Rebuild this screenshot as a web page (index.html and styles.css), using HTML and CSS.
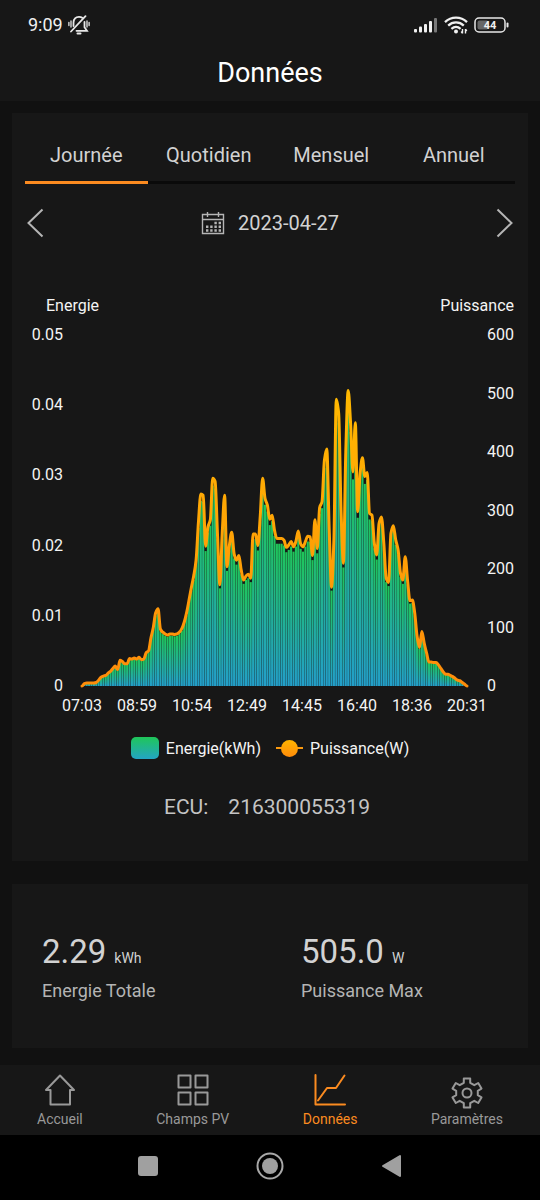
FILE: index.html
```html
<!DOCTYPE html>
<html lang="fr">
<head>
    <meta charset="UTF-8">
    <meta name="viewport" content="width=device-width, initial-scale=1.0">
    <title>Données</title>
    <link rel="stylesheet" href="styles.css">
</head>
<body>

    <!-- Header -->
    <header class="header">
        <div class="status-bar">
            <span class="clock">9:09</span>
            <svg class="bell" width="22" height="20" viewBox="0 0 22 20" fill="none" stroke="#e8e8e8" stroke-width="1.8" stroke-linecap="round">
                <path d="M5.500 11V7.500C5.700 4 8 1.800 11 1.800C12.300 1.800 13.400 2.100 14.200 2.700M16.500 7V12.200L19 15.800H8.500"/>
                <path d="M17.500 1.200L3 16.500"/>
                <path d="M9.500 18.500H12.500" stroke-width="2"/>
                <path d="M.9 7.500V10.500M3 6V12M19 6V12M21.100 7.500V10.500" stroke-width="1.300"/>
            </svg>
            <div class="status-right">
                <svg width="24" height="16" viewBox="0 0 24 16">
                    <g fill="#f0f0f0">
                        <rect x="0" y="12" width="3" height="3.500" rx="1"/>
                        <rect x="5" y="9.500" width="3" height="6" rx="1"/>
                        <rect x="10" y="7" width="3" height="8.500" rx="1"/>
                        <rect x="15" y="4" width="3" height="11.500" rx="1"/>
                    </g>
                    <rect x="20" y="1" width="3" height="14.500" rx="1" fill="#777"/>
                </svg>
                <svg width="24" height="18" viewBox="0 0 24 18" fill="none" stroke="#f0f0f0" stroke-width="2.300">
                    <path d="M1 6.200C7.200 .2 16.800 .2 23 6.200"/>
                    <path d="M4.200 9.600C8.700 5.400 15.300 5.400 19.800 9.600"/>
                    <path d="M7.400 12.800C10.200 10.400 13.800 10.400 16.600 12.800"/>
                    <circle cx="12" cy="15.600" r="2" fill="#f0f0f0" stroke="none"/>
                    <path d="M18.500 13V17.500M17.200 15.500L18.500 17.300M21.500 17.500V13M22.800 15L21.500 13.200" stroke-width="1.400"/>
                </svg>
                <svg width="36" height="16" viewBox="0 0 36 16">
                    <rect x="1" y="1" width="30" height="14" rx="4" fill="none" stroke="#e8e8e8" stroke-width="1.500"/>
                    <rect x="3.500" y="3.500" width="11" height="9" rx="2" fill="#666"/>
                    <rect x="32.500" y="5.500" width="2" height="5" rx="1" fill="#e8e8e8"/>
                    <text class="battery-text" x="16" y="12">44</text>
                </svg>
            </div>
        </div>
        <h1>Données</h1>
    </header>

    <main class="content">
        <!-- Chart card -->
        <section class="card chart-card">
            <div class="tabs">
                <button type="button" class="tab active">Journée</button>
                <button type="button" class="tab">Quotidien</button>
                <button type="button" class="tab">Mensuel</button>
                <button type="button" class="tab">Annuel</button>
            </div>

            <div class="date-row">
                <button type="button" class="arrow" aria-label="Jour précédent">
                    <svg width="17" height="30" viewBox="0 0 17 30"><path d="M15.500 1.500L1.500 15L15.500 28.500"/></svg>
                </button>
                <button type="button" class="date">
                    <svg width="24" height="24" viewBox="0 0 24 24" fill="none" stroke="#b5b5b5" stroke-width="1.400">
                        <path d="M1.500 3.500H22.500V22.500H1.500ZM1.500 8.500H22.500M6.500 1V6M17.500 1V6"/>
                        <path d="M13.400 12H20.500M5 15.800H20.500M5 19.500H20.500" stroke-width="2.400" stroke-dasharray="2.400 1.800"/>
                    </svg>
                    <span>2023-04-27</span>
                </button>
                <button type="button" class="arrow" aria-label="Jour suivant">
                    <svg width="17" height="30" viewBox="0 0 17 30"><path d="M1.500 1.500L15.500 15L1.500 28.500"/></svg>
                </button>
            </div>

            <svg id="chart" class="chart" viewBox="0 0 490 460">
                <defs>
                    <linearGradient id="barFill" x1="0" y1="0" x2="0" y2="1">
                        <stop offset="0" stop-color="#1fc659"/>
                        <stop offset="1" stop-color="#239fca"/>
                    </linearGradient>
                    <linearGradient id="lineFill" x1="0" y1="0" x2="0" y2="1">
                        <stop offset="0" stop-color="#ffb800"/>
                        <stop offset="1" stop-color="#ff8c0a"/>
                    </linearGradient>
                </defs>
                <text x="21" y="49">Energie</text>
                <text x="489" y="49" text-anchor="end">Puissance</text>
                <g id="bars" fill="url(#barFill)"></g>
                <path id="line" fill="none" stroke="url(#lineFill)" stroke-width="3" stroke-linejoin="round" stroke-linecap="round"/>
                <g id="labels"></g>
            </svg>

            <div class="legend">
                <span class="legend-item"><i class="swatch-bar"></i>Energie(kWh)</span>
                <span class="legend-item"><i class="swatch-line"></i>Puissance(W)</span>
            </div>

            <p class="ecu"><span>ECU:</span><span>216300055319</span></p>
        </section>

        <!-- Totals -->
        <section class="card totals">
            <div class="total">
                <p class="value">2.29<small>kWh</small></p>
                <p class="name">Energie Totale</p>
            </div>
            <div class="total">
                <p class="value">505.0<small>W</small></p>
                <p class="name">Puissance Max</p>
            </div>
        </section>
    </main>

    <!-- App navigation -->
    <nav class="nav">
        <a href="#accueil">
            <svg width="32" height="32" viewBox="0 0 32 32"><path d="M16 1.500L30 16H26V30.500H6.500V16H2Z"/></svg>
            Accueil
        </a>
        <a href="#champs">
            <svg width="32" height="32" viewBox="0 0 32 32"><path d="M1.500 1.500H13.500V13.500H1.500ZM18.500 1.500H30.500V13.500H18.500ZM1.500 18.500H13.500V30.500H1.500ZM18.500 18.500H30.500V30.500H18.500Z"/></svg>
            Champs PV
        </a>
        <a href="#donnees" class="active">
            <svg width="32" height="32" viewBox="0 0 32 32"><path d="M1.500 1V30.500H31M4 26.500L13 14H22L30.500 1.500"/></svg>
            Données
        </a>
        <a href="#parametres">
            <svg class="gear" width="32" height="32" viewBox="0 0 32 32">
                <path d="M12.800 1.500H19.200V5.800L23.300 8.200L27.200 6L30.500 11.600L26.800 13.800V18.200L30.500 20.400L27.200 26L23.300 23.800L19.200 26.200V30.500H12.800V26.200L8.700 23.800L4.800 26L1.500 20.400L5.200 18.200V13.800L1.500 11.600L4.800 6L8.700 8.200L12.800 5.800Z"/>
                <circle cx="16" cy="16" r="4.500"/>
            </svg>
            Paramètres
        </a>
    </nav>

    <!-- Phone buttons -->
    <div class="system-bar">
        <button type="button" aria-label="Applications récentes">
            <svg width="28" height="28" viewBox="0 0 28 28"><rect x="4" y="4" width="20" height="20" rx="3" fill="#a0a0a0"/></svg>
        </button>
        <button type="button" aria-label="Écran d'accueil">
            <svg width="28" height="28" viewBox="0 0 28 28"><circle cx="14" cy="14" r="12.500" fill="none" stroke="#a8a8a8" stroke-width="2"/><circle cx="14" cy="14" r="8" fill="#a0a0a0"/></svg>
        </button>
        <button type="button" aria-label="Retour">
            <svg width="28" height="28" viewBox="0 0 28 28"><path d="M5 14L22 4V24Z" fill="#a0a0a0" stroke="#a0a0a0" stroke-width="2" stroke-linejoin="round"/></svg>
        </button>
    </div>

    <script src="script.js"></script>
</body>
</html>
```

FILE: styles.css
```css
/* General Styles */
* {
    box-sizing: border-box;
}
body {
    font-family: Roboto, 'Liberation Sans', sans-serif;
    margin: 0;
    min-height: 100vh;
    display: flex;
    flex-direction: column;
    background-color: #111;
    color: #d2d2d2;
}
h1, p {
    margin: 0;
    font-weight: normal;
}
button {
    font-family: inherit;
    font-size: 20px;
    color: inherit;
    background: none;
    border: none;
    padding: 0;
    cursor: pointer;
}
svg {
    display: block;
}

/* Header */
.header {
    background-color: #171717;
    height: 101px;
}
.status-bar {
    display: flex;
    align-items: center;
    height: 49px;
    padding: 0 30px 0 28px;
    color: #f0f0f0;
}
.clock {
    font-size: 18px;
    margin-right: 5px;
}
.status-right {
    display: flex;
    align-items: center;
    gap: 6px;
    margin-left: auto;
}
.battery-text {
    font-size: 11px;
    font-weight: bold;
    fill: #f0f0f0;
    text-anchor: middle;
}
h1 {
    font-size: 27px;
    line-height: 48px;
    text-align: center;
    color: #fff;
}

/* Cards */
.content {
    flex: 1;
    display: flex;
    flex-direction: column;
    gap: 23px;
    padding: 12px 12px 17px;
}
.card {
    background-color: #171717;
}
.chart-card {
    padding: 0 13px 21px;
}
.tabs {
    display: flex;
    border-bottom: 3px solid #0a0a0a;
}
.tab {
    flex: 1;
    height: 71px;
    padding-top: 16px;
    margin-bottom: -3px;
    border-bottom: 3px solid transparent;
}
.tab.active {
    border-bottom-color: #fb8b20;
}
.date-row {
    display: flex;
    align-items: center;
    justify-content: space-between;
    height: 78px;
    padding: 0 2px;
}
.arrow path {
    fill: none;
    stroke: #b5b5b5;
    stroke-width: 2;
}
.date {
    display: flex;
    align-items: center;
    gap: 13px;
}

/* Chart */
.chart {
    width: 100%;
}
.chart text {
    font-size: 16px;
    fill: #f4f4f4;
}
.legend {
    display: flex;
    justify-content: center;
    align-items: center;
    gap: 15px;
    height: 52px;
    font-size: 16px;
    color: #f4f4f4;
}
.legend-item {
    display: flex;
    align-items: center;
    gap: 7px;
}
.swatch-bar {
    width: 28px;
    height: 22px;
    border-radius: 5px;
    background: linear-gradient(#1fc659, #23a5c4);
}
.swatch-line {
    display: flex;
    align-items: center;
    justify-content: center;
    width: 27px;
    height: 18px;
    background: linear-gradient(#fb9a10, #fb9a10) center / 100% 2px no-repeat;
}
.swatch-line::before {
    content: "";
    width: 17px;
    height: 17px;
    border-radius: 50%;
    background: linear-gradient(#ffb400, #ff8c0a);
}
.ecu {
    display: flex;
    justify-content: center;
    align-items: center;
    gap: 20px;
    height: 66px;
    padding-right: 6px;
    font-size: 21px;
    color: #c4c4c4;
}

/* Totals */
.totals {
    display: grid;
    grid-template-columns: 1fr 1fr;
    align-content: start;
    height: 164px;
    padding: 47px 0 0 30px;
}
.value {
    font-size: 33px;
    line-height: 42px;
}
.value small {
    margin-left: 8px;
    font-size: 14px;
}
.name {
    font-size: 18px;
    line-height: 24px;
    color: #b4b4b4;
}
.total + .total {
    padding-left: 16px;
}

/* Navigation */
.nav {
    display: flex;
    justify-content: space-between;
    height: 70px;
    padding: 9px 37px 0;
    background-color: #171717;
}
.nav a {
    display: flex;
    flex-direction: column;
    align-items: center;
    gap: 5px;
    font-size: 14px;
    line-height: 16px;
    color: #999;
    text-decoration: none;
}
.nav a.active {
    color: #fb8b20;
}
.nav svg {
    fill: none;
    stroke: currentColor;
    stroke-width: 2;
    stroke-linejoin: round;
    stroke-linecap: round;
}
.nav .gear {
    margin: 3px 0 -3px;
}

/* System bar */
.system-bar {
    display: flex;
    justify-content: center;
    gap: 94px;
    height: 65px;
    padding-bottom: 3px;
    background-color: #000;
}
```

FILE: script.js
```js
// Power readings of the day (W), evenly spaced from 07:03 to 20:31
const power = [
    0, 4, 5, 5, 5, 5, 6, 10, 15, 17, 18, 22, 25, 30, 34, 28, 44, 42, 38, 38,
    47, 46, 48, 46, 49, 45, 46, 57, 60, 82, 100, 125, 132, 97, 92, 89, 87, 89, 89, 88,
    89, 92, 98, 109, 125, 146, 168, 188, 215, 280, 328, 326, 239, 272, 284, 355, 350, 260, 173, 260,
    326, 204, 240, 263, 226, 215, 223, 198, 181, 188, 191, 184, 260, 260, 240, 290, 355, 321, 309, 285,
    292, 266, 252, 252, 252, 249, 237, 241, 247, 238, 247, 265, 243, 238, 247, 256, 255, 223, 284, 235,
    305, 315, 386, 405, 270, 169, 250, 490, 466, 300, 210, 400, 505, 450, 366, 450, 298, 363, 390, 358,
    365, 295, 292, 244, 224, 278, 289, 244, 184, 177, 261, 274, 250, 233, 193, 181, 221, 180, 146, 147,
    125, 85, 66, 93, 73, 56, 41, 41, 40, 40, 36, 30, 24, 20, 20, 18, 16, 13, 10, 9,
    6, 3, 0
];
const times = ['07:03', '08:59', '10:54', '12:49', '14:45', '16:40', '18:36', '20:31'];

const left = 57, right = 442, top0 = 73, base = 424;
const step = (right - left) / (power.length - 1);
const x = i => left + i * step;
const y = w => base - w / 600 * (base - top0);

// Energy bars
document.getElementById('bars').innerHTML = power.map((w, i) => {
    const h = (base - y(w)) * 0.965;
    return `<rect x="${(x(i) - 1.05).toFixed(2)}" y="${(base - h).toFixed(2)}" width="2.1" height="${h.toFixed(2)}"/>`;
}).join('');

// Power curve, flat at each peak and dip
const slope = power.map((w, i) => {
    if (i === 0 || i === power.length - 1) return 0;
    const a = y(w) - y(power[i - 1]);
    const b = y(power[i + 1]) - y(w);
    return a * b <= 0 ? 0 : 2 * a * b / (a + b);
});
let d = `M${x(0)} ${y(power[0])}`;
for (let i = 1; i < power.length; i++) {
    const y0 = y(power[i - 1]) + slope[i - 1] / 3;
    const y1 = y(power[i]) - slope[i] / 3;
    d += `C${x(i - 1) + step / 3} ${y0} ${x(i) - step / 3} ${y1} ${x(i)} ${y(power[i])}`;
}
document.getElementById('line').setAttribute('d', d);

// Axis labels
let labels = '';
for (let i = 0; i <= 5; i++) {
    labels += `<text x="38" y="${y(i * 120) + 5}" text-anchor="end">${i / 100}</text>`;
}
for (let i = 0; i <= 6; i++) {
    labels += `<text x="462" y="${y(i * 100) + 5}">${i * 100}</text>`;
}
times.forEach((t, i) => {
    labels += `<text x="${left + i * (right - left) / 7}" y="449" text-anchor="middle">${t}</text>`;
});
document.getElementById('labels').innerHTML = labels;
```
